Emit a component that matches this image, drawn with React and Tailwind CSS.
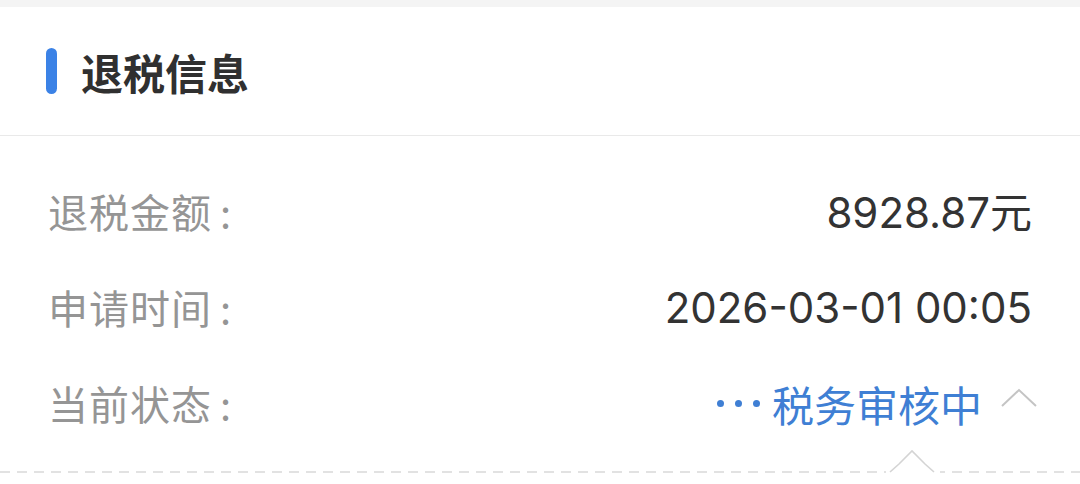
import React from "react";

const cjk = { fontFamily: '"Noto Sans CJK SC", "Noto Sans", sans-serif' };
const num = { fontFamily: 'Inter, "Noto Sans CJK SC", sans-serif' };

function Row({ label, children }) {
  return (
    <div className="flex h-[96px] items-center justify-between">
      <div className="flex items-center text-[40px] tracking-[1px] text-[#959595]" style={cjk}>
        <span>{label}</span>
        <span className="ml-[8px]">:</span>
      </div>
      {children}
    </div>
  );
}

function Caret({ className }) {
  return (
    <svg className={className} width="38" height="22" viewBox="0 0 38 22" fill="none">
      <polyline points="2,19 19,3 36,19" stroke="#c4c4c4" strokeWidth="2" />
    </svg>
  );
}

export default function App() {
  return (
    <div className="relative h-[484px] w-[1080px] overflow-hidden bg-white">
      <div className="h-[7px] bg-[#f4f4f4]" />
      <div className="flex h-[129px] items-center border-b border-[#e9e9e9] pl-[46px]">
        <div className="h-[46px] w-[11px] rounded-full bg-[#3b82e6]" />
        <div className="ml-[24px] text-[42px] font-bold text-[#303030]" style={cjk}>
          退税信息
        </div>
      </div>
      <div className="px-[48px] pt-[27px]">
        <Row label="退税金额">
          <div className="text-[42px] text-[#333333]" style={num}>
            8928.87<span style={cjk}>元</span>
          </div>
        </Row>
        <Row label="申请时间">
          <div className="text-[42px] text-[#333333]" style={num}>
            2026-03-01 00:05
          </div>
        </Row>
        <Row label="当前状态">
          <div className="-mr-[6px] flex items-center">
            <div className="flex items-center gap-[11px]">
              <span className="h-[7px] w-[7px] rounded-full bg-[#3f7fd4]" />
              <span className="h-[7px] w-[7px] rounded-full bg-[#3f7fd4]" />
              <span className="h-[7px] w-[7px] rounded-full bg-[#3f7fd4]" />
            </div>
            <div className="ml-[12px] text-[42px] text-[#3f7fd4]" style={cjk}>
              税务审核中
            </div>
            <Caret className="ml-[18px] -mt-[10px]" />
          </div>
        </Row>
      </div>
      <div className="absolute left-0 top-[471px] h-[2px] w-[1080px] bg-[repeating-linear-gradient(90deg,#e2e2e2_0_10px,transparent_10px_17px)]" />
      <svg className="absolute left-[886px] top-[446px]" width="54" height="30" viewBox="0 0 54 30" fill="none">
        <rect x="0" y="22" width="54" height="8" fill="white" />
        <polyline points="4,26 13,18 26,5 39,18 48,26" stroke="#d4d4d4" strokeWidth="1.6" />
      </svg>
    </div>
  );
}
